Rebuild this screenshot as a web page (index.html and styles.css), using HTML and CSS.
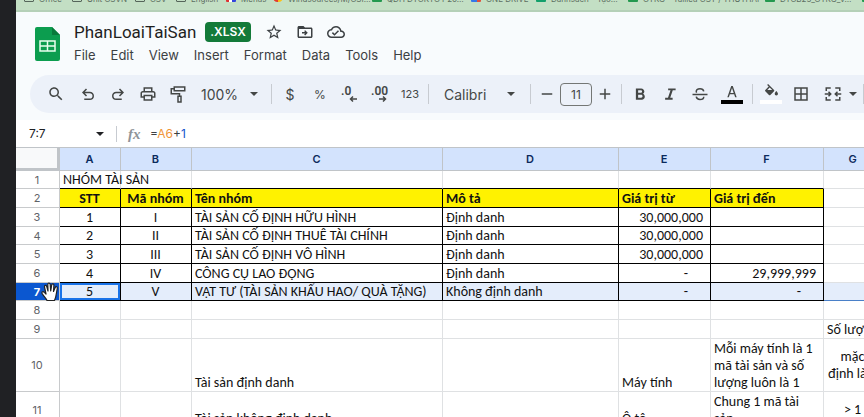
FILE: index.html
```html
<!DOCTYPE html>
<html lang="vi">
<head>
<meta charset="utf-8">
<title>PhanLoaiTaiSan</title>
<link rel="stylesheet" href="styles.css">
</head>
<body>
<div class="screen">
<aside class="edge"></aside>
<main class="app">
  <nav class="bookmarks" aria-label="Bookmarks">
    <a href="#" class="w48"><i class="folder"></i>Office</a>
    <a href="#" class="w63"><i class="folder"></i>Unit CSVN</a>
    <a href="#" class="w41"><i class="folder"></i>CSV</a>
    <a href="#" class="w50"><i class="folder"></i>English</a>
    <a href="#" class="w47"><i class="tiles"></i>Menus</a>
    <a href="#" class="w99"><i class="chrome"></i>Windsources/M/CSI…</a>
    <a href="#" class="w99"><i class="sheet"></i>QĐH ĐTCKTC P20…</a>
    <a href="#" class="w65"><i class="drive"></i>ONE DRIVE</a>
    <a href="#" class="w92"><i class="form"></i>Danhsách - Tạo…</a>
    <a href="#" class="w137"><i class="sheet"></i>CTKG - Tailieu CST / THUTHAP</a>
    <a href="#" class="w97"><i class="sheet"></i>DTCB25_CTKG_V…</a>
    <a href="#"><i class="sheet"></i></a>
  </nav>

  <header class="top">
    <svg class="logo" viewBox="0 0 25 34" aria-hidden="true">
      <path fill="#0c9d4f" d="M2 0h15l8 8v24a2 2 0 0 1-2 2H2a2 2 0 0 1-2-2V2a2 2 0 0 1 2-2z"/>
      <path fill="#087a3b" d="M17 0l8 8h-8z"/>
      <path fill="none" stroke="#e9fff0" stroke-width="1.5" d="M5 14h15v10H5zM5 19h15M12.500 14v10"/>
    </svg>
    <div class="heading">
      <div class="title-row">
        <h1>PhanLoaiTaiSan</h1>
        <span class="tag">.XLSX</span>
        <button class="ico" aria-label="Star"><svg viewBox="0 0 24 24"><path d="M22 9.240l-7.190-.62L12 2 9.190 8.630 2 9.240l5.460 4.730L5.820 21 12 17.270 18.180 21l-1.630-7.030L22 9.240zM12 15.400l-3.760 2.270 1-4.280-3.320-2.880 4.380-.38L12 6.100l1.710 4.040 4.380.38-3.320 2.880 1 4.280L12 15.400z"/></svg></button>
        <button class="ico" aria-label="Move"><svg viewBox="0 0 24 24"><path d="M20 6h-8l-2-2H4c-1.100 0-2 .9-2 2v12c0 1.100.9 2 2 2h16c1.100 0 2-.9 2-2V8c0-1.100-.9-2-2-2zm0 12H4V8h16v10zM12.200 9.500l-1.300 1.300 1.100 1.200H8v2h4l-1.100 1.200 1.300 1.300 3.500-3.500z"/></svg></button>
        <button class="ico" aria-label="Saved"><svg viewBox="0 0 24 24"><path d="M19.350 10.040C18.670 6.590 15.640 4 12 4 9.110 4 6.600 5.640 5.350 8.040 2.340 8.360 0 10.910 0 14c0 3.310 2.690 6 6 6h13c2.760 0 5-2.240 5-5 0-2.640-2.050-4.780-4.650-4.960zM19 18H6c-2.210 0-4-1.790-4-4 0-2.050 1.530-3.760 3.560-3.970l1.070-.11.5-.95C8.080 7.140 9.940 6 12 6c2.620 0 4.880 1.860 5.390 4.430l.3 1.500 1.530.11c1.560.1 2.780 1.410 2.780 2.960 0 1.650-1.350 3-3 3zm-9-3.820l-2.090-2.090L6.500 13.500 10 17l6.010-6.010-1.410-1.410z"/></svg></button>
      </div>
      <nav class="menus" aria-label="Menu">
        <button>File</button><button>Edit</button><button>View</button><button>Insert</button><button>Format</button><button>Data</button><button>Tools</button><button>Help</button>
      </nav>
    </div>
  </header>

  <div class="toolbar" role="toolbar">
    <button class="tool search" aria-label="Search"><svg viewBox="0 0 24 24"><path d="M15.500 14h-.79l-.28-.27C15.410 12.590 16 11.110 16 9.500 16 5.910 13.090 3 9.500 3S3 5.910 3 9.500 5.910 16 9.500 16c1.610 0 3.090-.59 4.230-1.570l.27.28v.79l5 4.990L20.490 19l-4.990-5zm-6 0C7.010 14 5 11.990 5 9.500S7.010 5 9.500 5 14 7.010 14 9.500 11.990 14 9.500 14z"/></svg></button>
    <button class="tool" aria-label="Undo"><svg viewBox="0 0 24 24"><path d="M7 20v-2h7.500c2 0 3.500-1.400 3.500-3.500S16.500 11 14.500 11H7.800l2.900 2.900-1.400 1.400L4 10l5.300-5.300 1.400 1.400L7.800 9h6.700c3.100 0 5.500 2.300 5.500 5.500S17.600 20 14.500 20z"/></svg></button>
    <button class="tool" aria-label="Redo"><svg viewBox="0 0 24 24"><path d="M17 20v-2H9.500C7.500 18 6 16.600 6 14.500S7.500 11 9.500 11h6.700l-2.900 2.900 1.400 1.400L20 10l-5.300-5.300-1.400 1.400L16.200 9H9.500C6.400 9 4 11.300 4 14.500S6.400 20 9.500 20z"/></svg></button>
    <button class="tool" aria-label="Print"><svg viewBox="0 0 24 24"><path d="M19 8h-1V3H6v5H5c-1.660 0-3 1.340-3 3v6h4v4h12v-4h4v-6c0-1.660-1.340-3-3-3zM8 5h8v3H8V5zm8 14H8v-4h8v4zm4-4h-2v-2H6v2H4v-4c0-.55.45-1 1-1h14c.55 0 1 .45 1 1z"/></svg></button>
    <button class="tool" aria-label="Paint format"><svg viewBox="0 0 24 24"><path fill="none" stroke="currentColor" stroke-width="2" d="M7 2.500h14v5H7zM7 5H3v6.500h11V15M12 15h4v7.500h-4z"/></svg></button>
    <button class="zoom">100%<i class="caret"></i></button>
    <span class="sep"></span>
    <button class="tool">$</button>
    <button class="tool pct">%</button>
    <button class="tool" aria-label="Decrease decimals"><svg class="dec" viewBox="0 0 20 20"><text x="1" y="11">.0</text><path d="M17 15H11M13 12.500L10.500 15l2.500 2.500"/></svg></button>
    <button class="tool" aria-label="Increase decimals"><svg class="dec" viewBox="0 0 20 20"><text x="1" y="11">.00</text><path d="M9 15h6M13 12.500l2.500 2.500-2.500 2.500"/></svg></button>
    <button class="tool num">123</button>
    <span class="sep"></span>
    <button class="font">Calibri<i class="caret"></i></button>
    <span class="sep"></span>
    <button class="step" aria-label="Smaller"><svg viewBox="0 0 24 24"><path d="M5 11h14v2H5z"/></svg></button>
    <input class="size" aria-label="Font size" value="11">
    <button class="step" aria-label="Larger"><svg viewBox="0 0 24 24"><path d="M5 11h6V5h2v6h6v2h-6v6h-2v-6H5z"/></svg></button>
    <span class="sep"></span>
    <button class="tool" aria-label="Bold"><svg viewBox="0 0 24 24"><path d="M16.100 11.700c1-.7 1.700-1.800 1.700-2.900C17.800 6.400 16 4.500 13.600 4.500H6.500v15h8c2.200 0 3.900-1.800 3.900-4 0-1.600-.9-3-2.300-3.800zM9.500 7h3.600c.9 0 1.600.7 1.600 1.700s-.7 1.700-1.600 1.700H9.500zm4.100 10H9.500v-3.900h4.100c1 0 1.800.9 1.800 1.900s-.8 2-1.800 2z"/></svg></button>
    <button class="tool" aria-label="Italic"><svg viewBox="0 0 24 24"><path d="M9.500 4.500V7h3.200L9.300 17H5.500v2.500h10V17h-3.200l3.400-10h3.800V4.500z"/></svg></button>
    <button class="tool" aria-label="Strikethrough"><svg viewBox="0 0 24 24"><path fill="none" stroke="currentColor" stroke-width="2" d="M2 12.500h20M17 8.500C16.500 6 14.500 5 12 5S7 6.300 7 8.700c0 .6.200 1.100.5 1.500M7 15.500c.4 2.600 2.500 3.700 5 3.700s5-1.200 5-3.700"/></svg></button>
    <button class="tool swatch black" aria-label="Text color"><svg viewBox="0 0 24 24"><path d="M10.800 3L5 20h2.300l1.500-4.500h6.400l1.500 4.500H19L13.200 3zM9.500 13.500L12 6l2.500 7.500z"/></svg></button>
    <span class="sep"></span>
    <button class="tool swatch white" aria-label="Fill color"><svg viewBox="0 0 24 24"><path d="M16.560 8.940L7.620 0 6.210 1.410l2.380 2.380-5.150 5.150c-.59.59-.59 1.540 0 2.120l5.500 5.500c.29.290.68.440 1.060.440s.77-.15 1.060-.44l5.500-5.500c.59-.58.59-1.530 0-2.120zM6.500 9L10 5.210 13.800 9zM20 10.500s-2.500 2.700-2.500 4.300a2.500 2.500 0 0 0 5 0c0-1.600-2.500-4.300-2.500-4.300z"/></svg></button>
    <button class="tool" aria-label="Borders"><svg viewBox="0 0 24 24"><path d="M3 3v18h18V3zm8 16H5v-6h6zm0-8H5V5h6zm8 8h-6v-6h6zm0-8h-6V5h6z"/></svg></button>
    <button class="tool merge" aria-label="Merge cells"><svg viewBox="0 0 24 24"><path fill="none" stroke="currentColor" stroke-width="2" d="M9 4H3v4M15 4h6v4M9 20H3v-4M15 20h6v-4M1 12h8M6 9l3 3-3 3M23 12h-8M18 9l-3 3 3 3"/></svg><i class="caret"></i></button>
    <span class="sep"></span>
  </div>

  <div class="formula">
    <button class="namebox">7:7<i class="caret"></i></button>
    <span class="fx">fx</span>
    <span class="expr">=<span class="ref">A6</span>+<span class="lit">1</span></span>
  </div>

  <table class="grid">
    <colgroup><col class="c0"><col class="ca"><col class="cb"><col class="cc"><col class="cd"><col class="ce"><col class="cf"><col class="cg"></colgroup>
    <thead><tr><th></th><th>A</th><th>B</th><th>C</th><th>D</th><th>E</th><th>F</th><th>G</th></tr></thead>
    <tbody>
      <tr class="first"><th>1</th><td>NHÓM TÀI SẢN</td><td></td><td></td><td></td><td></td><td></td><td></td></tr>
      <tr class="box head"><th>2</th><td class="mid">STT</td><td class="mid">Mã nhóm</td><td>Tên nhóm</td><td>Mô tả</td><td>Giá trị từ</td><td>Giá trị đến</td><td></td></tr>
      <tr class="box"><th>3</th><td class="mid">1</td><td class="mid">I</td><td>TÀI SẢN CỐ ĐỊNH HỮU HÌNH</td><td>Định danh</td><td class="amt">30,000,000</td><td class="amt"></td><td></td></tr>
      <tr class="box"><th>4</th><td class="mid">2</td><td class="mid">II</td><td>TÀI SẢN CỐ ĐỊNH THUÊ TÀI CHÍNH</td><td>Định danh</td><td class="amt">30,000,000</td><td class="amt"></td><td></td></tr>
      <tr class="box"><th>5</th><td class="mid">3</td><td class="mid">III</td><td>TÀI SẢN CỐ ĐỊNH VÔ HÌNH</td><td>Định danh</td><td class="amt">30,000,000</td><td class="amt"></td><td></td></tr>
      <tr class="box"><th>6</th><td class="mid">4</td><td class="mid">IV</td><td>CÔNG CỤ LAO ĐỘNG</td><td>Định danh</td><td class="amt nil">-</td><td class="amt">29,999,999</td><td></td></tr>
      <tr class="box picked"><th>7<svg class="hand" viewBox="0 0 18 20" aria-hidden="true"><path fill="#fff" stroke="#222" stroke-width="1.200" stroke-linejoin="round" d="M6 18.500C5 16 2 13.500 1 11.200c-.5-1.500 1.300-2 2.300-.8L5 12 3.500 5c-.3-1.800 1.700-2.200 2.200-.6L7 9 6.800 2.500C6.800.6 9 .6 9.200 2.500L9.700 9l1-6c.3-1.700 2.400-1.400 2.200.4L12.500 9.500l1.700-4c.7-1.500 2.500-.8 2.100.8-.8 3.500-.8 8-2.800 12.200z"/></svg></th><td class="mid current">5</td><td class="mid">V</td><td>VẬT TƯ (TÀI SẢN KHẤU HAO/ QUÀ TẶNG)</td><td>Không định danh</td><td class="amt nil">-</td><td class="amt nil">-</td><td></td></tr>
      <tr><th>8</th><td></td><td></td><td></td><td></td><td></td><td></td><td></td></tr>
      <tr><th>9</th><td></td><td></td><td></td><td></td><td></td><td></td><td>Số lượng</td></tr>
      <tr class="tall"><th>10</th><td></td><td></td><td>Tài sản định danh</td><td></td><td>Máy tính</td><td class="wrap">Mỗi máy tính là 1 mã tài sản và số lượng luôn là 1</td><td class="wrap mid ctr">mặc định là 1</td></tr>
      <tr class="pair"><th>11</th><td></td><td></td><td>Tài sản không định danh</td><td></td><td>Ô tô</td><td class="wrap">Chung 1 mã tài sản</td><td class="mid ctr">&gt; 1</td></tr>
    </tbody>
  </table>
</main>
</div>
</body>
</html>
```
FILE: styles.css
```css
* { box-sizing: border-box; }
body { margin: 0; font-family: Inter, "Liberation Sans", sans-serif; color: #3c4043; }
button, input { font: inherit; color: inherit; background: none; border: 0; padding: 0; margin: 0; }
svg { display: block; fill: currentColor; }
.screen { display: flex; height: 100vh; overflow: hidden; }
.edge { flex: none; width: 16px; background: #202124; }
.app { flex: 1; min-width: 0; overflow: hidden; background: #f8fbfd; }

.bookmarks { display: flex; align-items: flex-end; height: 12px; padding: 0 0 5px 8px; overflow: hidden; background: #c3dfc4; border-bottom: 2px solid #b5d0b8; }
.bookmarks a { flex: none; display: flex; align-items: flex-start; gap: 5px; height: 12px; padding-right: 8px; font-size: 8px; line-height: 12px; color: #5c6e61; text-decoration: none; white-space: nowrap; overflow: hidden; }
.bookmarks i { flex: none; width: 10px; height: 9px; border-radius: 1px; }
.folder { border: 1px solid #55655a; }
.tiles { background: linear-gradient(90deg, #d33 33%, #fff 33% 60%, #34d 60%); }
.chrome { background: linear-gradient(90deg, #e33b2e 50%, #fbc116 50%); }
.bookmarks .chrome { border-radius: 5px; }
.sheet { background: #23994f; }
.form { background: #13a06b; }
.drive { background: linear-gradient(90deg, #3478e8 60%, #e0503c 60%); }
.w41 { width: 41px; } .w47 { width: 47px; } .w48 { width: 48px; } .w50 { width: 50px; }
.w63 { width: 63px; } .w65 { width: 65px; } .w92 { width: 92px; } .w97 { width: 97px; }
.w99 { width: 99px; } .w137 { width: 137px; }

.top { display: flex; gap: 14px; padding: 9px 0 0 19px; height: 63px; }
.logo { flex: none; width: 25px; height: 34px; margin-top: 6px; }
.title-row { display: flex; align-items: center; height: 22px; }
h1 { margin: 0 9px 0 0; font: 400 17px/22px Roboto, sans-serif; color: #1f1f1f; }
.tag { padding: 0 5px; margin-right: 14px; border-radius: 4px; background: #137a39; color: #fff; font-size: 12px; line-height: 20px; font-weight: 600; }
.ico { margin-right: 13px; }
.ico svg { width: 18px; height: 18px; }
.menus { display: flex; gap: 15px; font-size: 13px; line-height: 24px; }

.toolbar { display: flex; align-items: center; height: 38px; margin-left: 14px; padding-left: 11px; background: #ecf1f9; border-radius: 19px 0 0 19px; overflow: hidden; color: #444746; }
.toolbar > * { flex: none; }
.tool { display: flex; align-items: center; justify-content: center; width: 30px; height: 28px; font-size: 14px; }
.toolbar .search { margin-right: 2px; }
.tool svg, .step svg { width: 18px; height: 18px; }
.num, .pct { font-size: 12px; }
.num { font-size: 11px; }
.caret { display: inline-block; border: 4px solid transparent; border-top-color: currentColor; border-bottom: 0; }
.zoom { display: flex; align-items: center; gap: 12px; width: 75px; padding-left: 8px; font-size: 14px; }
.sep { width: 1px; height: 20px; margin: 0 3px; background: #c7cbd1; }
.tool .dec { width: 20px; height: 20px; overflow: visible; }
.dec text { font: 600 12px Roboto, sans-serif; }
.dec path { fill: none; stroke: currentColor; stroke-width: 1.5; }
.font { display: flex; align-items: center; justify-content: space-between; width: 95px; padding: 0 12px; font-size: 14px; }
.step { width: 26px; display: flex; justify-content: center; }
.size { width: 32px; height: 23px; border: 1px solid #747775; border-radius: 4px; text-align: center; font-size: 12px; }
.swatch { flex-direction: column; }
.black { width: 34px; }
.swatch svg { width: 16px; height: 16px; }
.swatch::after { content: ""; width: 22px; height: 4px; background: #000; }
.white::after { background: #fff; }
.merge { width: 44px; gap: 7px; justify-content: flex-end; padding-right: 3px; }

.formula { display: flex; align-items: center; height: 27px; margin-top: 7px; background: #fff; font-size: 12px; }
.namebox { display: flex; align-items: center; justify-content: space-between; width: 101px; height: 16px; padding: 0 12px 0 13px; border-right: 1px solid #c7cbd1; color: #202124; }
.fx { width: 33px; padding-left: 11px; font: italic 700 15px/20px "Liberation Serif", serif; color: #8f9499; }
.ref { color: #f0953a; }
.lit { color: #1155cc; }

.grid { table-layout: fixed; width: 867px; border-collapse: separate; border-spacing: 0; background: #fff; }
.c0 { width: 44px; } .ca { width: 61px; } .cb { width: 71px; } .cc { width: 251px; }
.cd { width: 176px; } .ce { width: 92px; } .cf { width: 113px; } .cg { width: 59px; }
.grid th, .grid td { padding: 0 4px 0 3px; border: solid #dfe1e3; border-width: 0 1px 1px 0; white-space: nowrap; }
thead th { height: 24px; background: #d3e3fd; font: 600 11px/16px Inter, sans-serif; color: #0b2a5c; }
.grid thead th { border-top-width: 1px; border-color: #c0c4c8; }
.grid thead th:first-child { background: #f8f9fa; border-width: 1px 3px 3px 0; }
tbody tr { height: 19px; }
tbody tr:nth-child(3n+1) { height: 18px; }
tbody th { font: 400 11px/16px Inter, sans-serif; color: #5f6368; }
.grid tbody th { border-color: #c8cacc; }
td { font: 400 14px/17px Carlito, Lato, sans-serif; color: #111; vertical-align: bottom; }
.grid .box td:nth-child(-n+7) { border-color: #000; }
.grid .first td:nth-child(-n+7) { border-bottom-color: #000; }
.head td:nth-child(-n+7) { background: #fff200; font-weight: 700; }
.mid { text-align: center; }
.grid .amt { text-align: right; padding-right: 7px; }
.grid .nil { padding-right: 22px; }
.picked td { background: #e4edfb; }
.grid .picked td:last-child { border-bottom-color: #4a80c8; }
.grid .picked th { position: relative; background: #0b57d0; color: #fff; font-weight: 700; }
.grid .picked .current { box-shadow: inset 0 0 0 2px #1a73e8; }
.grid .wrap { white-space: normal; }
.grid .tall:nth-child(n) { height: 53px; }
.grid .pair { height: 36px; }
.grid .ctr { vertical-align: middle; }
.hand { position: absolute; right: 0; top: -1px; width: 18px; height: 20px; }
```
